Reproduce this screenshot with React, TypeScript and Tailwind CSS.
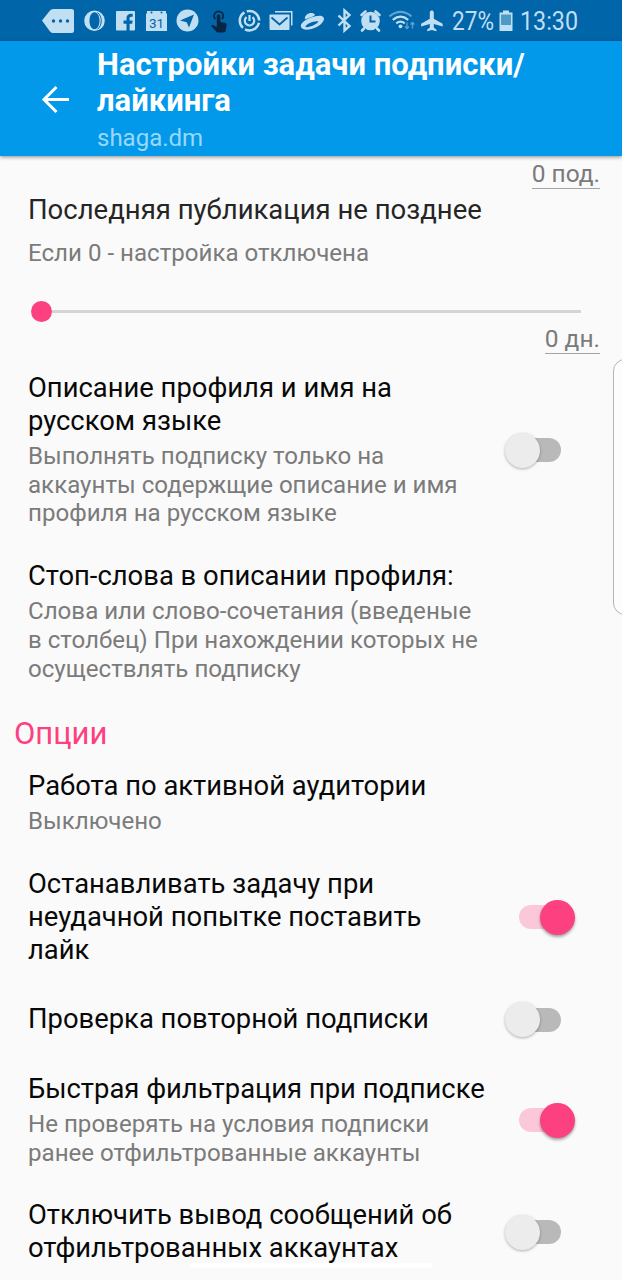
import React, { useState } from "react";

type SettingProps = {
  title: string[];
  summary?: string[];
  checked?: boolean;
  className?: string;
};

const Toggle = ({ on, onClick }: { on: boolean; onClick: () => void }) => (
  <button
    type="button"
    role="switch"
    aria-checked={on}
    onClick={onClick}
    className={
      on
        ? "flex h-6 w-[42px] items-center justify-end rounded-full bg-[#fbc8da]"
        : "flex h-6 w-[42px] items-center rounded-full bg-[#b9b9b9]"
    }
  >
    <span
      className={
        on
          ? "-mr-3.5 size-[35px] shrink-0 rounded-full bg-[#fc4080] shadow-[0_2px_3px_rgba(0,0,0,0.35)]"
          : "-ml-3.5 size-[35px] shrink-0 rounded-full bg-[#ececec] shadow-[0_1px_3px_rgba(0,0,0,0.3)]"
      }
    />
  </button>
);

const Setting = ({ title, summary, checked, className }: SettingProps) => {
  const [on, setOn] = useState(checked);
  return (
    <div className={`flex items-center justify-between py-4 pr-[61px] pl-7 ${className ?? ""}`}>
      <div className="whitespace-nowrap">
        <h3 className="text-[27.4px] leading-[33px] text-[#080808]">
          {title.map((line) => (
            <span key={line} className="block">
              {line}
            </span>
          ))}
        </h3>
        {summary && (
          <p className="mt-1 text-[24.1px] leading-[28.7px] text-[#7b7b7b]">
            {summary.map((line) => (
              <span key={line} className="block">
                {line}
              </span>
            ))}
          </p>
        )}
      </div>
      {on !== undefined && <Toggle on={on} onClick={() => setOn(!on)} />}
    </div>
  );
};

const StatusBar = () => (
  <div className="h-[41px] bg-[#0065a9] text-[#c1dff3]">
    <svg width="622" height="41" viewBox="0 0 622 41" fill="currentColor">
      {/* more notifications */}
      <path d="M42 20.5 50 10.5Q51.5 9 53 9H71.500Q74 9 74 11.500V30.500Q74 33 71.500 33H53Q51.500 33 50 31.500Z" />
      <g fill="#0065a9">
        <circle cx="53.500" cy="21" r="1.700" />
        <circle cx="60.500" cy="21" r="1.700" />
        <circle cx="67.500" cy="21" r="1.700" />
      </g>
      {/* opera */}
      <path fillRule="evenodd" d="M94.500 10.500a10.300 10.300 0 1 0 0 20.600 10.300 10.300 0 1 0 0-20.600ZM94.500 12.300c3 0 5 4 5 8.500s-2 8.500-5 8.500-5-4-5-8.500 2-8.500 5-8.500Z" />
      <path d="M97.500 12.500c5 4 5 12.500 0 16.800" fill="none" stroke="#0065a9" strokeWidth="1" />
      {/* facebook */}
      <rect x="116" y="11" width="19" height="19.500" rx="1" />
      <path d="M126.500 31v-7.300h-3v-3.100h3v-2.200c0-3 1.800-4.600 4.300-4.600h1.900v3h-1.300c-1.400 0-1.800.7-1.800 1.800v2h3l-.4 3.100h-2.600V31Z" fill="#0065a9" />
      {/* calendar */}
      <path d="M147 11h19v2.500h1V31h-21V13.500h1Z" />
      <g fill="#0065a9">
        <circle cx="151.500" cy="12.500" r="1" />
        <circle cx="161.500" cy="12.500" r="1" />
        <text x="156.500" y="27.800" fontSize="13.500" textAnchor="middle">
          31
        </text>
      </g>
      {/* telegram */}
      <circle cx="187.500" cy="20.500" r="11" />
      <path d="m180 20.500 14-6-5 13-2.300-5.200-6.700-1.800Z" fill="#0065a9" />
      {/* touch */}
      <g fill="#082644">
        <path d="M216.800 27V16.200c0-2.400 3.500-2.400 3.500 0v5.500l5 1.200c1 .3 1.500 1 1.400 2l-1 5.600c-.2 1.200-1 2-2 2h-5.500c-.8 0-1.500-.5-2-1l-5-5.500 1.300-1.200Z" />
        <path d="M215.400 19.200a4.600 4.600 0 1 1 6.500 0" fill="none" stroke="#082644" strokeWidth="1.700" />
      </g>
      {/* power ring */}
      <g fill="none" stroke="currentColor">
        <circle cx="249.500" cy="20.700" r="9.700" strokeWidth="2.500" strokeDasharray="17.800 2.500" strokeDashoffset="-2" />
        <path d="M246.500 17.200a4.700 4.700 0 1 0 6 0M249.500 15v6" strokeWidth="2.200" />
      </g>
      {/* mail */}
      <path d="M275 11h17.500v14.500H291V12.500H275Z" />
      <rect x="269.500" y="14.500" width="20" height="15.500" rx=".8" />
      <path d="m271.500 17.500 8 7 8-7" fill="none" stroke="#0065a9" strokeWidth="1.800" />
      {/* saucer */}
      <g transform="rotate(-22 312 22)">
        <path fillRule="evenodd" d="M300 22.500c0-3.200 5-5 12-5s12.500 1.800 12.500 5-5.500 6-12.500 6-12-2.800-12-6Zm4 1.500c1.700 2.300 12 2.300 14 0-2.500-2.500-11.500-2.500-14 0Z" />
        <path d="M306.500 16.700c1-5 10-5 11 0-3 .8-8 .8-11 0Z" />
      </g>
      {/* bluetooth */}
      <path d="m338.500 15.500 11 10.500-5 4.500v-20l5 4.500-11 10.500" fill="none" stroke="currentColor" strokeWidth="2.400" />
      {/* alarm */}
      <circle cx="370.500" cy="21" r="9.300" />
      <path d="m361.500 15 4-3.500M379.500 15l-4-3.500M364 28.500l-2 2M377 28.500l2 2" stroke="currentColor" strokeWidth="2.600" strokeLinecap="round" />
      <path d="M370.500 15.500v6h5" fill="none" stroke="#0065a9" strokeWidth="2" />
      {/* wifi */}
      <g fill="none" stroke="currentColor" strokeWidth="2.200">
        <path d="M389.500 16.300q11-9 22 0" opacity=".5" />
        <path d="M392.800 19.800q7.700-6.300 15.400 0M396.300 23.300q4.200-3.300 8.400 0" />
      </g>
      <circle cx="400.500" cy="26.300" r="1.900" />
      <path d="M407 22.500v6m-2-2 2 2 2-2M412.500 28.500v-6m-2 2 2-2 2 2" fill="none" stroke="currentColor" strokeWidth="1.300" opacity=".5" />
      {/* airplane */}
      <path d="M429.800 12.500c.3-2.600 3.700-2.600 4 0v6.300l8.900 5v2.700l-8.900-2.500v3.500l2.700 2.200v1.500l-4.700-1.200-4.700 1.200v-1.500l2.700-2.200V24l-8.700 2.500v-2.700l8.700-5Z" />
      <text x="452" y="30" fontSize="26" textLength="42" lengthAdjust="spacingAndGlyphs">
        27%
      </text>
      {/* battery */}
      <path d="M503 10.500h6v2h3.500V31h-13V12.500h3.500Z" />
      <rect x="501" y="14.500" width="10" height="10.500" fill="#4c9ac8" />
      <text x="520" y="30" fontSize="26" textLength="58" lengthAdjust="spacingAndGlyphs">
        13:30
      </text>
    </svg>
  </div>
);

export default function App() {
  return (
    <div className="relative flex h-[1280px] w-[622px] flex-col overflow-hidden bg-[#fafafa] font-[Roboto,sans-serif]">
      <StatusBar />
      <header className="z-10 flex h-[115px] shrink-0 items-center bg-[#0299eb] pl-[41px] shadow-[0_1px_4px_rgba(0,0,0,0.45)]">
        <svg width="29" height="28" viewBox="0 0 29 28" fill="none" stroke="#fff" strokeWidth="3">
          <path d="M28 14.500H3M15.500 2 3 14.500 15.500 27" />
        </svg>
        <div className="ml-[27px] pt-[3px] whitespace-nowrap">
          <h1 className="text-[31px] leading-9 font-bold text-white">
            Настройки задачи подписки/
            <br />
            лайкинга
          </h1>
          <p className="mt-[3px] text-[24px] leading-8 text-[#9bd7f8]">shaga.dm</p>
        </div>
      </header>

      <main className="flex flex-col">
        <div className="flex h-[33px] items-start justify-end pr-[22px]">
          <span className="border-b border-[#a5a5a5] pt-[3px] text-[24.5px] leading-[29px] text-[#7b7b7b]">0 под.</span>
        </div>
        <section className="flex h-[167px] flex-col">
          <h3 className="mt-1 pl-7 text-[27.5px] leading-[33px] text-[#252525]">Последняя публикация не позднее</h3>
          <p className="mt-[13px] pl-7 text-[24.1px] leading-[28.6px] text-[#7b7b7b]">Если 0 - настройка отключена</p>
          <div className="mt-[33px] mr-[41px] ml-[31px] flex h-[21px] items-center">
            <span className="size-[21px] rounded-full bg-[#fc4080]" />
            <span className="h-[3px] flex-1 bg-[#d5d5d5]" />
          </div>
          <div className="flex justify-end pr-[22px]">
            <span className="border-b border-[#a5a5a5] pt-0.5 text-[24.5px] leading-[29px] text-[#7b7b7b]">0 дн.</span>
          </div>
        </section>
        <Setting
          title={["Описание профиля и имя на", "русском языке"]}
          summary={["Выполнять подписку только на", "аккаунты содержщие описание и имя", "профиля на русском языке"]}
          checked={false}
        />
        <Setting
          title={["Стоп-слова в описании профиля:"]}
          summary={["Слова или слово-сочетания (введеные", "в столбец) При нахождении которых не", "осуществлять подписку"]}
        />
        <h2 className="h-[55px] pt-[17px] pl-3.5 text-[31px] leading-9 text-[#fc4080]">Опции</h2>
        <Setting title={["Работа по активной аудитории"]} summary={["Выключено"]} />
        <Setting title={["Останавливать задачу при", "неудачной попытке поставить", "лайк"]} checked={true} />
        <Setting title={["Проверка повторной подписки"]} checked={false} className="h-[74px]" />
        <Setting
          title={["Быстрая фильтрация при подписке"]}
          summary={["Не проверять на условия подписки", "ранее отфильтрованные аккаунты"]}
          checked={true}
        />
        <Setting title={["Отключить вывод сообщений об", "отфильтрованных аккаунтах"]} checked={false} />
      </main>

      {/* edge panel handle */}
      <div className="absolute top-[359px] left-[613px] h-[256px] w-6 rounded-xl border border-[#b5b5b5] bg-white/50" />
      {/* gesture hint */}
      <div className="absolute top-[1263px] left-[190px] h-[5px] w-[242px] bg-white" />
    </div>
  );
}
